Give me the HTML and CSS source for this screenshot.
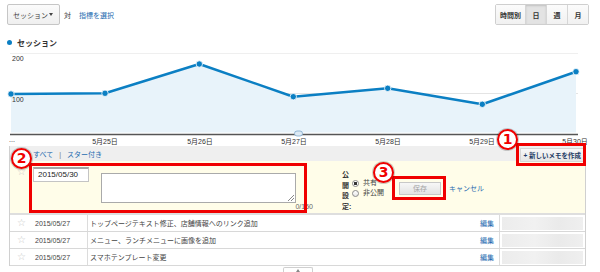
FILE: index.html
```html
<!DOCTYPE html>
<html lang="ja">
<head>
  <meta charset="UTF-8">
  <title>メモ</title>
  <link rel="stylesheet" href="styles.css">
</head>
<body>
  <div class="toolbar">
    <div class="toolbar-left">
      <div class="metric-select"><span>セッション</span><span class="caret"></span></div>
      <span class="versus">対</span>
      <a class="link pick-metric" href="#">指標を選択</a>
    </div>
    <div class="btn-group">
      <span class="seg seg-hour">時間別</span><span class="seg active">日</span><span class="seg">週</span><span class="seg">月</span>
    </div>
  </div>

  <div class="legend"><span class="dot"></span>セッション</div>

  <!-- sessions chart, drawn in page coordinates -->
  <svg class="chart" width="600" height="96" viewBox="0 50 600 96">
    <line x1="10" y1="53.5" x2="578" y2="53.5" stroke="#efefef"/>
    <line x1="10" y1="93.5" x2="578" y2="93.5" stroke="#e4e4e4"/>
    <polygon points="11,94 105,93.3 199.3,64 293.3,96.7 387.7,88.3 482.3,104.3 576,71.7 576,132.5 11,132.5" fill="#e8f3fa"/>
    <polyline points="11,94 105,93.3 199.3,64 293.3,96.7 387.7,88.3 482.3,104.3 576,71.7" fill="none" stroke="#0b7fc3" stroke-width="2.5" stroke-linejoin="round"/>
    <g fill="#0b7fc3" stroke="#fff" stroke-width="0.8">
      <circle cx="11" cy="94" r="3.2"/>
      <circle cx="105" cy="93.3" r="3.2"/>
      <circle cx="199.3" cy="64" r="3.2"/>
      <circle cx="293.3" cy="96.7" r="3.2"/>
      <circle cx="387.7" cy="88.3" r="3.2"/>
      <circle cx="482.3" cy="104.3" r="3.2"/>
      <circle cx="576" cy="71.7" r="3.2"/>
    </g>
    <line x1="10" y1="134.5" x2="578" y2="134.5" stroke="#555" stroke-width="1.5"/>
    <rect x="294.5" y="131" width="8" height="5" rx="2.5" fill="#dce9f4" stroke="#7fa8cc" stroke-width="0.8"/>
    <text x="12" y="60.5">200</text>
    <text x="12" y="101.5">100</text>
    <text x="9" y="142">...</text>
    <g text-anchor="middle">
      <text x="105" y="143.5">5月25日</text>
      <text x="200" y="143.5">5月26日</text>
      <text x="294" y="143.5">5月27日</text>
      <text x="388" y="143.5">5月28日</text>
      <text x="482" y="143.5">5月29日</text>
      <text x="575" y="143.5">5月30日</text>
    </g>
  </svg>

  <div class="panel">
    <div class="panel-head">
      <div class="filters">
        <a class="link" href="#">すべて</a><span class="sep">|</span><a class="link" href="#">スター付き</a>
      </div>
      <span class="new-memo">+ 新しいメモを作成</span>
    </div>

    <div class="memo-form">
      <span class="star">☆</span>
      <div class="date-input">2015/05/30</div>
      <div class="memo-col">
        <div class="memo-text"></div>
        <div class="counter">0/150</div>
      </div>
      <div class="vis-label">公<br>開<br>設<br>定:</div>
      <div class="radios">
        <div class="radio"><span class="radio-dot checked"></span>共有</div>
        <div class="radio"><span class="radio-dot"></span>非公開</div>
      </div>
      <span class="save-btn">保存</span>
      <a class="link cancel" href="#">キャンセル</a>
    </div>

    <div class="memo-row">
      <span class="star">☆</span>
      <span class="row-date">2015/05/27</span>
      <span class="row-title">トップページテキスト修正、店舗情報へのリンク追加<a class="link" href="#">編集</a></span>
      <span class="row-thumb"><span class="blur"></span></span>
    </div>
    <div class="memo-row">
      <span class="star">☆</span>
      <span class="row-date">2015/05/27</span>
      <span class="row-title">メニュー、ランチメニューに画像を追加<a class="link" href="#">編集</a></span>
      <span class="row-thumb"><span class="blur"></span></span>
    </div>
    <div class="memo-row">
      <span class="star">☆</span>
      <span class="row-date">2015/05/27</span>
      <span class="row-title">スマホテンプレート変更<a class="link" href="#">編集</a></span>
      <span class="row-thumb"><span class="blur"></span></span>
    </div>
  </div>
  <div class="bottom-tab"><span class="tab-caret"></span></div>

  <!-- annotation overlays -->
  <div class="mark mark-new"></div>
  <div class="mark mark-form"></div>
  <div class="mark mark-save"></div>
  <div class="num num-1">1</div>
  <div class="num num-2">2</div>
  <div class="num num-3">3</div>
</body>
</html>
```

FILE: styles.css
```css
body {
  margin: 0;
  width: 600px;
  height: 272px;
  overflow: hidden;
  position: relative;
  background-color: #fff;
  font-family: "Liberation Sans", "Noto Sans CJK JP", sans-serif;
  font-size: 7px;
  color: #333;
}
.link {
  color: #1f6cb0;
  text-decoration: none;
}

/* top toolbar */
.toolbar {
  display: flex;
  justify-content: space-between;
  padding: 4px 11px 0 7px;
}
.toolbar-left {
  display: flex;
  align-items: center;
  height: 21px;
}
.metric-select {
  width: 53px;
  height: 21px;
  box-sizing: border-box;
  border: 1px solid #c6c6c6;
  border-radius: 2px;
  background: linear-gradient(#fbfbfb, #efefef);
  display: flex;
  align-items: center;
  justify-content: space-between;
  padding: 0 6px 0 5px;
  color: #444;
}
.caret {
  width: 0;
  height: 0;
  border-left: 2.5px solid transparent;
  border-right: 2.5px solid transparent;
  border-top: 3px solid #444;
}
.versus {
  margin-left: 4px;
}
.pick-metric {
  margin-left: 8px;
}
.btn-group {
  display: flex;
  height: 21px;
  box-sizing: border-box;
  border: 1px solid #cfcfcf;
  border-radius: 2px;
}
.seg {
  width: 20px;
  display: flex;
  align-items: center;
  justify-content: center;
  border-left: 1px solid #d6d6d6;
  background: linear-gradient(#fbfbfb, #f1f1f1);
  font-weight: bold;
  color: #333;
}
.seg-hour {
  width: 29px;
  border-left: none;
}
.seg.active {
  background: #e3e3e3;
  box-shadow: inset 0 1px 2px rgba(0, 0, 0, 0.15);
}

/* legend + chart */
.legend {
  display: flex;
  align-items: center;
  margin: 12px 0 0 7px;
  height: 10px;
  font-size: 8px;
  font-weight: bold;
  color: #333;
}
.dot {
  width: 5px;
  height: 5px;
  border-radius: 50%;
  background-color: #0b7fc3;
  margin-right: 5px;
}
.chart {
  display: block;
  margin-top: 3px;
}
.chart text {
  font-family: "Liberation Sans", "Noto Sans CJK JP", sans-serif;
  font-size: 7px;
  fill: #333;
}

/* memo panel */
.panel {
  margin-left: 9px;
  width: 577px;
  box-sizing: border-box;
  border-left: 1px solid #d0d0d0;
  border-right: 1px solid #d0d0d0;
}
.panel-head {
  height: 15px;
  background-color: #efefef;
  display: flex;
  align-items: center;
  justify-content: space-between;
  padding: 0 1px 0 23px;
}
.sep {
  color: #777;
  margin: 0 6px;
}
.new-memo {
  align-self: flex-start;
  margin-top: 2px;
  height: 14px;
  box-sizing: border-box;
  padding: 0 2px;
  display: flex;
  align-items: center;
  background: linear-gradient(#f8f8f8, #e6e6e6);
  border: 1px solid #d6d6d6;
  font-size: 6.5px;
  font-weight: bold;
  color: #1d3b64;
}
.memo-form {
  height: 52px;
  background-color: #fffde9;
  border-bottom: 2px solid #dedede;
  display: flex;
  align-items: flex-start;
}
.star {
  width: 23px;
  text-align: center;
  font-family: "DejaVu Sans", sans-serif;
  font-size: 10px;
  color: #c8c8c8;
}
.memo-form .star {
  margin-top: 5px;
}
.date-input {
  width: 56px;
  height: 15px;
  box-sizing: border-box;
  margin-top: 6px;
  padding-left: 4px;
  border: 1px solid #c4c4c4;
  border-top: 2px solid #a5a5a5;
  background-color: #fff;
  font-size: 8px;
  line-height: 12px;
  color: #222;
}
.memo-col {
  margin: 12px 0 0 12px;
  width: 212px;
}
.memo-text {
  width: 195px;
  height: 30px;
  box-sizing: border-box;
  border: 1px solid #aaa;
  background-color: #fff;
  position: relative;
}
.memo-text::after {
  content: "";
  position: absolute;
  right: 1px;
  bottom: 1px;
  width: 6px;
  height: 6px;
  background: linear-gradient(135deg, transparent 45%, #888 45%, #888 55%, transparent 55%, transparent 70%, #888 70%, #888 80%, transparent 80%);
}
.counter {
  text-align: right;
  line-height: 8px;
  color: #666;
}
.vis-label {
  margin: 9px 0 0 29px;
  width: 9px;
  line-height: 10.5px;
  font-weight: bold;
  color: #333;
}
.radios {
  margin: 17px 0 0 1px;
  line-height: 10px;
  color: #444;
}
.radio {
  display: flex;
  align-items: center;
}
.radio-dot {
  width: 7px;
  height: 7px;
  box-sizing: border-box;
  border: 1px solid #8a8a8a;
  border-radius: 50%;
  background: linear-gradient(#fff, #e6e6e6);
  margin-right: 4px;
}
.radio-dot.checked {
  background: radial-gradient(#333 1.4px, #fff 1.8px);
}
.save-btn {
  margin: 21px 0 0 15px;
  width: 42px;
  height: 13px;
  box-sizing: border-box;
  border: 1px solid #c8c8c8;
  background: linear-gradient(#f7f7f7, #e3e3e3);
  color: #a5a5a5;
  text-align: center;
  line-height: 11px;
}
.cancel {
  margin: 21px 0 0 8px;
  line-height: 13px;
}
.memo-row {
  display: grid;
  grid-template-columns: 23px 55px 1fr 86px;
  height: 16px;
  border-bottom: 1px solid #d8d8d8;
}
.memo-row .star {
  line-height: 16px;
}
.row-date {
  display: flex;
  align-items: center;
  padding-left: 2px;
  border-right: 1px solid #dcdcdc;
  color: #444;
}
.row-title {
  display: flex;
  align-items: center;
  justify-content: space-between;
  padding: 0 5px 0 2px;
  color: #444;
}
.row-thumb {
  display: flex;
  border-left: 1px solid #dcdcdc;
  padding: 2px 2px 1px;
}
.blur {
  flex: 1;
  background: linear-gradient(90deg, #ececec, #f1f1f1 40%, #eaeaea 70%, #efefef);
}
.bottom-tab {
  margin: 1px 0 0 283px;
  width: 30px;
  height: 6px;
  box-sizing: border-box;
  border: 1px solid #cfcfcf;
  border-bottom: none;
  border-radius: 2px 2px 0 0;
  display: flex;
  justify-content: center;
}
.tab-caret {
  margin-top: 1px;
  width: 0;
  height: 0;
  border-left: 2.5px solid transparent;
  border-right: 2.5px solid transparent;
  border-bottom: 3px solid #888;
}

/* red annotation boxes and numbered badges */
.mark {
  position: absolute;
  box-sizing: border-box;
  border: 3px solid #f00000;
}
.mark-new {
  left: 516px;
  top: 143px;
  width: 70px;
  height: 23px;
}
.mark-form {
  left: 29px;
  top: 163px;
  width: 278px;
  height: 50px;
}
.mark-save {
  left: 392px;
  top: 176px;
  width: 54px;
  height: 24px;
}
.num {
  position: absolute;
  width: 21px;
  height: 21px;
  box-sizing: border-box;
  border: 2px solid #f00000;
  border-radius: 50%;
  background-color: #fff;
  box-shadow: 0 0 0 1px rgba(0, 0, 0, 0.18);
  color: #f00000;
  font-family: "DejaVu Sans", sans-serif;
  font-weight: bold;
  font-size: 14px;
  line-height: 17px;
  text-align: center;
}
.num-1 {
  left: 497px;
  top: 129px;
}
.num-2 {
  left: 11px;
  top: 148px;
}
.num-3 {
  left: 373px;
  top: 162px;
}
```
